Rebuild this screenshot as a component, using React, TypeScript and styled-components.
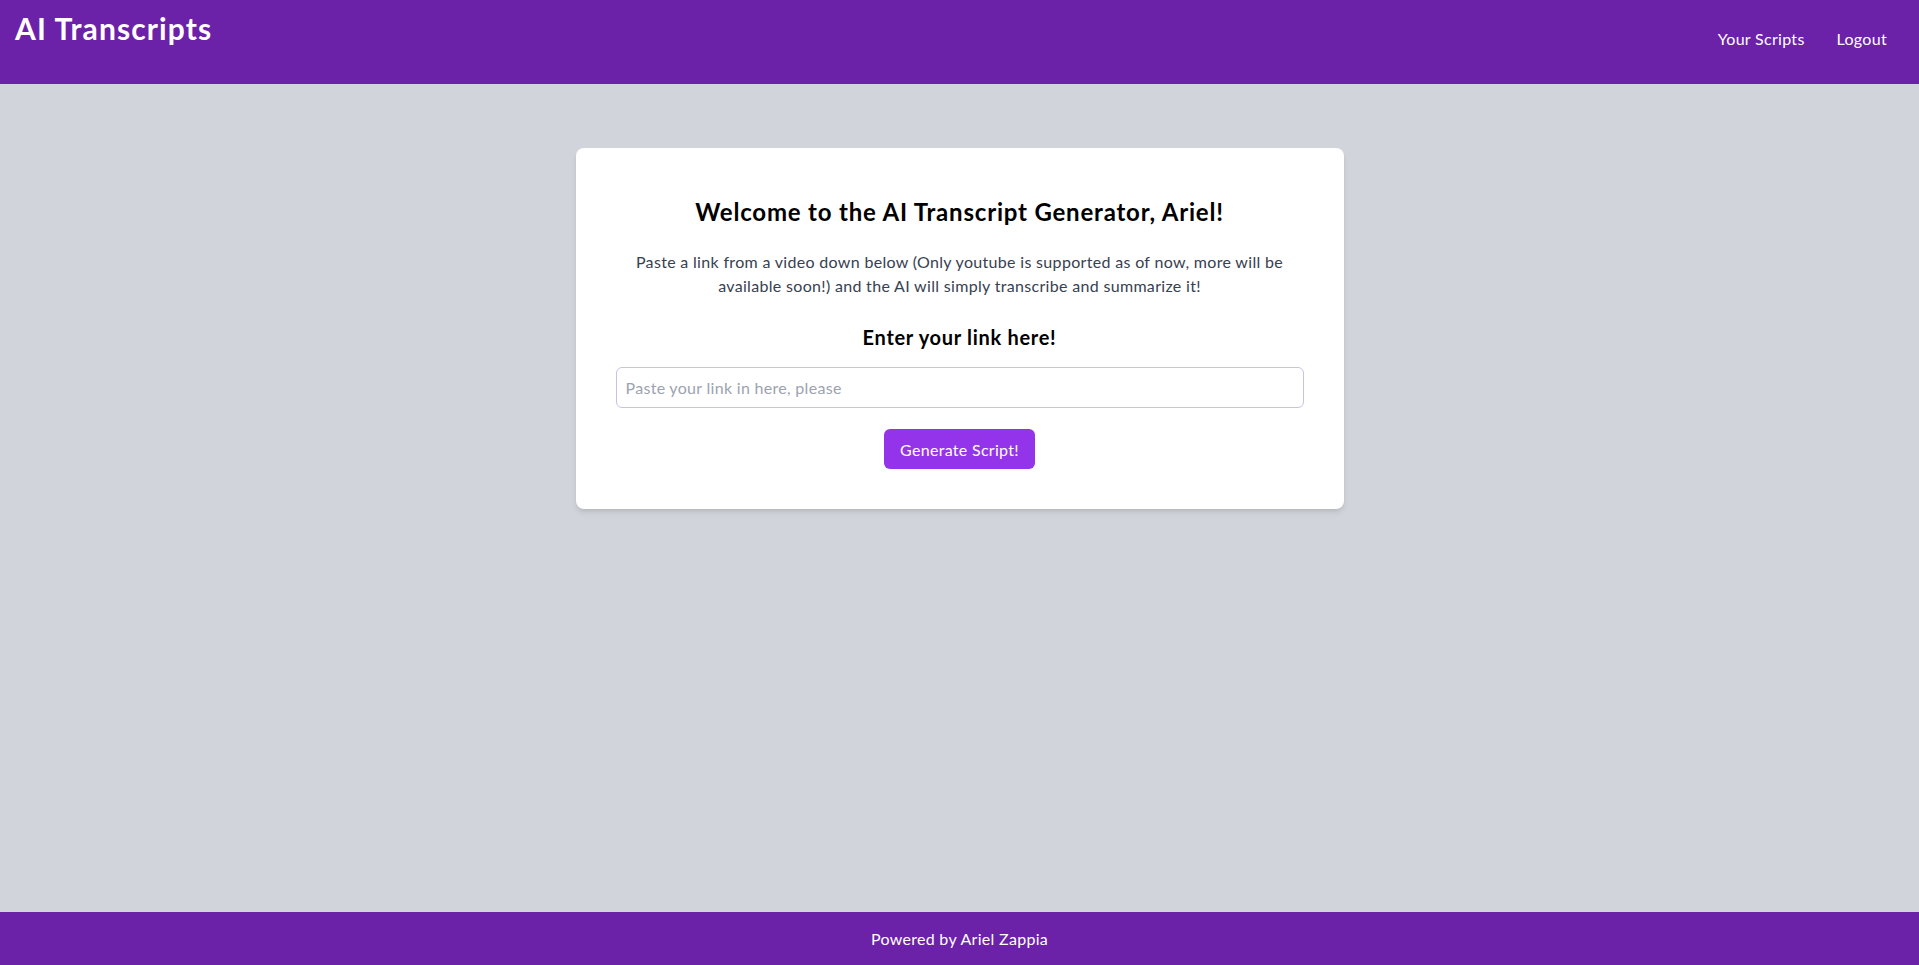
import React from "react";
import styled, { createGlobalStyle } from "styled-components";

const GlobalStyle = createGlobalStyle`
  * { box-sizing: border-box; }
  html, body { margin: 0; padding: 0; }
  body {
    font-family: Lato, "Open Sans", "Liberation Sans", sans-serif;
    background: #d1d5db;
  }
`;

const Page = styled.div`
  min-height: 100vh;
  display: flex;
  flex-direction: column;
  background: #d1d5db;
`;

const Header = styled.header`
  height: 84px;
  background: #6b21a8;
  display: flex;
  justify-content: space-between;
  align-items: flex-start;
  padding: 10px 32px 0 15px;
  color: #ffffff;
`;

const Brand = styled.h1`
  margin: 0;
  font-size: 30px;
  line-height: 36px;
  font-weight: 700;
  letter-spacing: 1.1px;
`;

const Nav = styled.nav`
  display: flex;
  gap: 32px;
  padding-top: 17px;
`;

const NavLink = styled.a`
  color: #ffffff;
  font-size: 16px;
  line-height: 24px;
  letter-spacing: 0.3px;
  text-decoration: none;
  cursor: pointer;
`;

const Main = styled.main`
  flex: 1;
  display: flex;
  justify-content: center;
  align-items: flex-start;
  padding-top: 64px;
`;

const Card = styled.section`
  width: 768px;
  background: #ffffff;
  border-radius: 8px;
  box-shadow: 0 4px 6px -1px rgba(0, 0, 0, 0.1), 0 2px 4px -2px rgba(0, 0, 0, 0.1);
  padding: 48px 40px 40px;
  display: flex;
  flex-direction: column;
  align-items: center;
  text-align: center;
`;

const Title = styled.h2`
  margin: 0;
  font-size: 24px;
  line-height: 32px;
  font-weight: 700;
  letter-spacing: 0.8px;
  color: #000000;
`;

const Intro = styled.p`
  margin: 22px 0 0;
  font-size: 16px;
  line-height: 24px;
  letter-spacing: 0.32px;
  color: #374151;
`;

const SubTitle = styled.h3`
  margin: 25px 0 0;
  font-size: 20px;
  line-height: 28px;
  font-weight: 700;
  letter-spacing: 0.7px;
  color: #000000;
`;

const LinkInput = styled.input`
  margin-top: 16px;
  width: 100%;
  height: 41px;
  border: 1px solid #c9c1ea;
  border-radius: 6px;
  padding: 0 9px;
  font-family: inherit;
  font-size: 16px;
  letter-spacing: 0.3px;
  color: #111827;
  outline: none;
  &::placeholder { color: #9ca3af; }
`;

const Button = styled.button`
  margin-top: 21px;
  height: 40px;
  padding: 0 16px;
  border: none;
  border-radius: 6px;
  background: #9333ea;
  color: #ffffff;
  font-family: inherit;
  font-size: 16px;
  letter-spacing: 0.3px;
  cursor: pointer;
`;

const Footer = styled.footer`
  height: 53px;
  background: #6b21a8;
  color: #ffffff;
  display: flex;
  align-items: center;
  justify-content: center;
  font-size: 16px;
  letter-spacing: 0.3px;
`;

export default function App() {
  return (
    <>
      <GlobalStyle />
      <Page>
        <Header>
          <Brand>AI Transcripts</Brand>
          <Nav>
            <NavLink>Your Scripts</NavLink>
            <NavLink>Logout</NavLink>
          </Nav>
        </Header>
        <Main>
          <Card>
            <Title>Welcome to the AI Transcript Generator, Ariel!</Title>
            <Intro>
              Paste a link from a video down below (Only youtube is supported as of now, more will be
              available soon!) and the AI will simply transcribe and summarize it!
            </Intro>
            <SubTitle>Enter your link here!</SubTitle>
            <LinkInput placeholder="Paste your link in here, please" />
            <Button>Generate Script!</Button>
          </Card>
        </Main>
        <Footer>Powered by Ariel Zappia</Footer>
      </Page>
    </>
  );
}
